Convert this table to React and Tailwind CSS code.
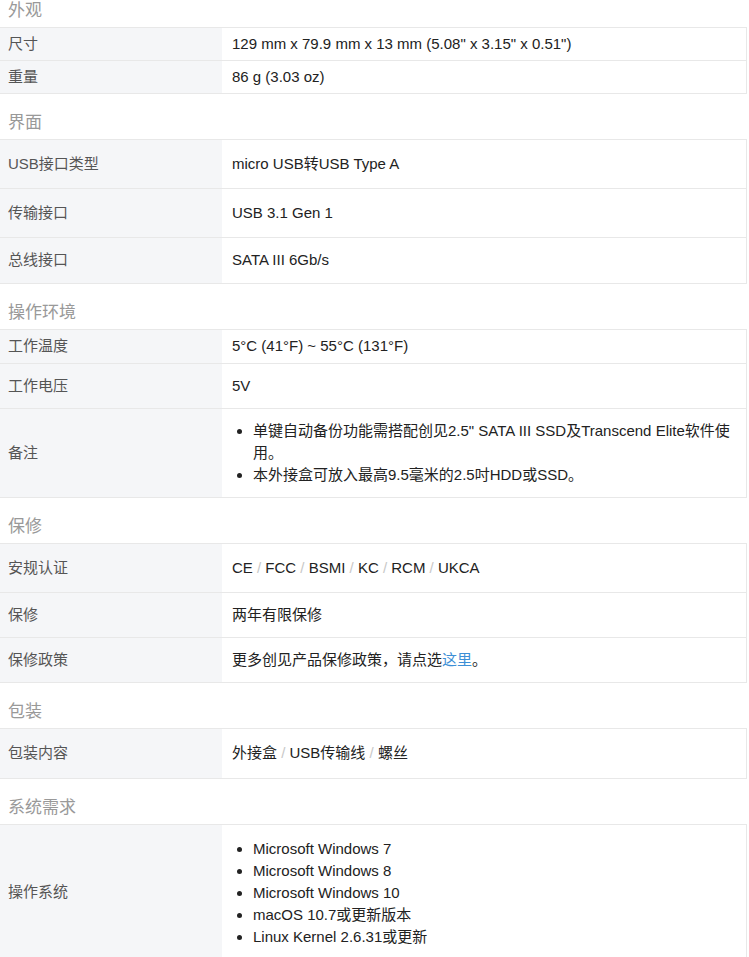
import React from "react";

const Sep = () => <span className="text-[#c8c8c8]"> / </span>;

const sections = [
  {
    title: "外观",
    rows: [
      { label: "尺寸", h: "h-[33px]", value: '129 mm x 79.9 mm x 13 mm (5.08" x 3.15" x 0.51")' },
      { label: "重量", h: "h-[33px]", value: "86 g (3.03 oz)" },
    ],
  },
  {
    title: "界面",
    rows: [
      { label: "USB接口类型", h: "h-[49px]", value: "micro USB转USB Type A" },
      { label: "传输接口", h: "h-[49px]", value: "USB 3.1 Gen 1" },
      { label: "总线接口", h: "h-[46px]", value: "SATA III 6Gb/s" },
    ],
  },
  {
    title: "操作环境",
    rows: [
      { label: "工作温度", h: "h-[34px]", value: "5°C (41°F) ~ 55°C (131°F)" },
      { label: "工作电压", h: "h-[45px]", value: "5V" },
      {
        label: "备注",
        h: "h-[89px]",
        list: [
          '单键自动备份功能需搭配创见2.5" SATA III SSD及Transcend Elite软件使用。',
          "本外接盒可放入最高9.5毫米的2.5吋HDD或SSD。",
        ],
      },
    ],
  },
  {
    title: "保修",
    rows: [
      {
        label: "安规认证",
        h: "h-[49px]",
        value: (
          <>
            CE<Sep />FCC<Sep />BSMI<Sep />KC<Sep />RCM<Sep />UKCA
          </>
        ),
      },
      { label: "保修", h: "h-[45px]", value: "两年有限保修" },
      {
        label: "保修政策",
        h: "h-[45px]",
        value: (
          <>
            更多创见产品保修政策，请点选<span className="text-[#3d8fd6]">这里</span>。
          </>
        ),
      },
    ],
  },
  {
    title: "包装",
    rows: [
      {
        label: "包装内容",
        h: "h-[50px]",
        value: (
          <>
            外接盒<Sep />USB传输线<Sep />螺丝
          </>
        ),
      },
    ],
  },
  {
    title: "系统需求",
    rows: [
      {
        label: "操作系统",
        h: "h-[136px]",
        list: [
          "Microsoft Windows 7",
          "Microsoft Windows 8",
          "Microsoft Windows 10",
          "macOS 10.7或更新版本",
          "Linux Kernel 2.6.31或更新",
        ],
      },
    ],
  },
];

export default function App() {
  return (
    <div
      className="w-[749px] h-[957px] overflow-hidden bg-white"
      style={{ fontFamily: '"Liberation Sans", "Noto Sans CJK SC", sans-serif' }}
    >
      <div className="w-[747px] -mt-[18px]">
        {sections.map((sec) => (
          <div key={sec.title}>
            <div className="h-[45px] flex items-end pb-[4px] px-[8px] text-[17px] text-[#999]">
              {sec.title}
            </div>
            <div className="border-t border-r border-[#e8e8e8]">
              {sec.rows.map((row) => (
                <div key={row.label} className={`flex border-b border-[#e8e8e8] ${row.h}`}>
                  <div className="w-[222px] shrink-0 bg-[#f5f6f8] px-[8px] flex items-center text-[15px] text-[#555]">
                    {row.label}
                  </div>
                  <div className="flex-1 pl-[10px] pr-[6px] flex items-center text-[15px] text-[#222]">
                    {row.list ? (
                      <ul className="list-disc pl-[21px] leading-[22px]">
                        {row.list.map((t) => (
                          <li key={t}>{t}</li>
                        ))}
                      </ul>
                    ) : (
                      <span>{row.value}</span>
                    )}
                  </div>
                </div>
              ))}
            </div>
          </div>
        ))}
      </div>
    </div>
  );
}
